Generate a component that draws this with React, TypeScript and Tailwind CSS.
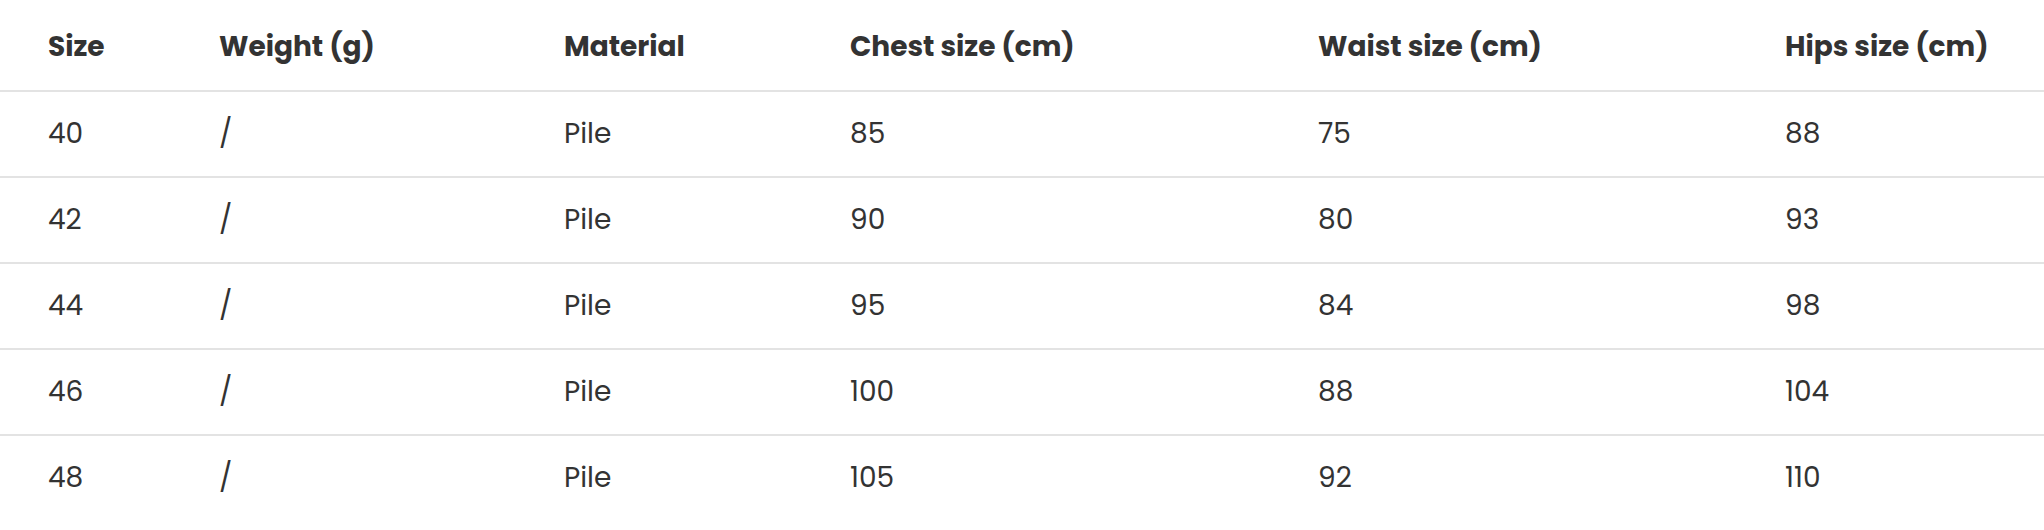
const columns = [
  "Size",
  "Weight (g)",
  "Material",
  "Chest size (cm)",
  "Waist size (cm)",
  "Hips size (cm)",
];

const rows = [
  ["40", "/", "Pile", "85", "75", "88"],
  ["42", "/", "Pile", "90", "80", "93"],
  ["44", "/", "Pile", "95", "84", "98"],
  ["46", "/", "Pile", "100", "88", "104"],
  ["48", "/", "Pile", "105", "92", "110"],
];

const gridCols =
  "grid grid-cols-[171px_345px_286px_468px_467px_1fr] items-center pl-[48px]";

export default function App() {
  return (
    <div
      className="w-full bg-white text-[#333333]"
      style={{ fontFamily: "Poppins, Lato, 'Noto Sans', sans-serif" }}
    >
      {/* header */}
      <div className={`${gridCols} h-[92px] pt-[3px] border-b-2 border-[#e3e3e3]`}>
        {columns.map((c) => (
          <div key={c} className="text-[28px] font-bold leading-none whitespace-nowrap">
            {c}
          </div>
        ))}
      </div>

      {/* rows */}
      {rows.map((row, r) => (
        <div
          key={r}
          className={`${gridCols} ${
            r === rows.length - 1 ? "h-[84px]" : "h-[86px] border-b-2 border-[#e3e3e3]"
          }`}
        >
          {row.map((cell, i) => (
            <div key={i} className="text-[28px] font-normal leading-none">
              {cell}
            </div>
          ))}
        </div>
      ))}
    </div>
  );
}
